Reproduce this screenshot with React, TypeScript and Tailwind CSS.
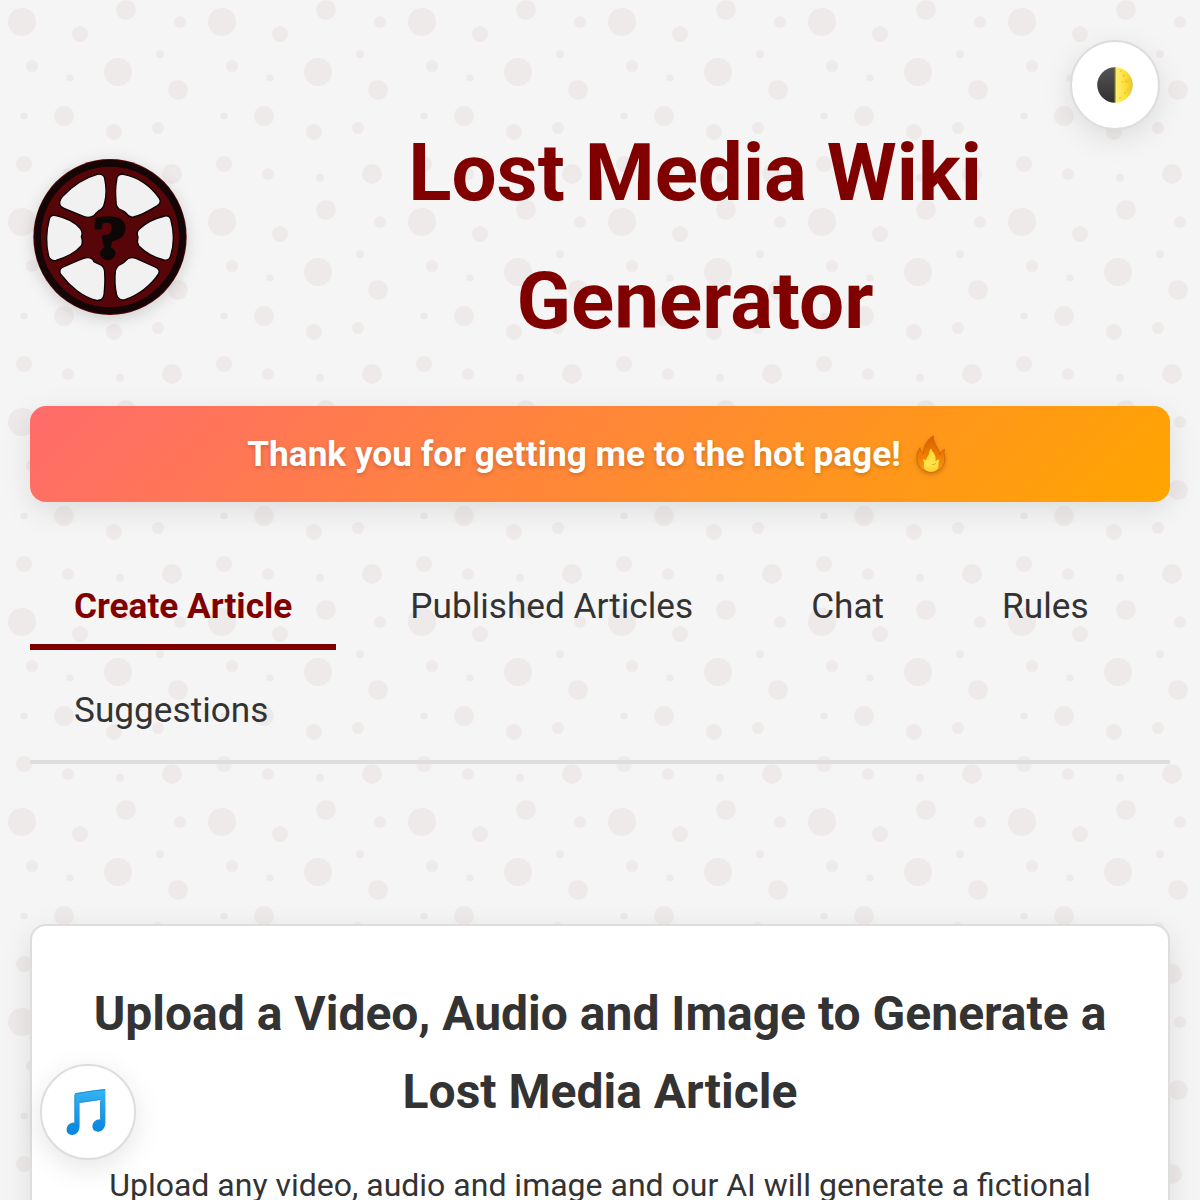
import React, { useState } from 'react';

const TABS = ['Create Article', 'Published Articles', 'Chat', 'Rules', 'Suggestions'];

// [cx, cy, r] inside a 200x200 tile
const BUBBLES = [
  [22, 22, 14], [118, 72, 14], [126, 10, 10], [178, 90, 10], [64, 116, 10], [172, 174, 10],
  [80, 34, 8], [114, 132, 8], [24, 164, 8], [180, 22, 6], [32, 66, 6], [158, 128, 6], [68, 174, 6],
  [160, 54, 4], [120, 178, 4], [70, 78, 3.6], [24, 116, 3.6],
];

const REEL_WINDOWS = [
  'M120 180Q116 168 128 154C160 120 195 98 232 88Q250 84 254 100C260 130 260 150 254 172Q250 192 238 196Q226 206 222 212Q205 222 185 212L132 190Q122 186 120 180Z',
  'M290 105Q290 86 310 88C355 95 395 125 418 160Q426 172 412 182C390 196 360 212 340 216Q328 218 318 204Q312 198 298 192Q288 186 288 168C286 145 286 125 290 105Z',
  'M88 222Q92 208 108 212C135 218 165 232 180 250Q190 262 184 275Q190 290 184 302C165 325 135 338 108 346Q92 350 86 334C78 300 78 260 88 222Z',
  'M452 222Q448 210 435 213C405 220 375 235 358 252Q348 262 354 276Q350 290 356 302C378 325 405 338 432 345Q448 348 452 332C462 300 462 258 452 222Z',
  'M120 378Q118 372 130 366C155 355 180 342 200 338Q216 336 222 350Q230 354 242 360Q254 366 254 385C256 410 254 430 252 450Q248 468 230 466C190 458 150 425 124 390Q118 384 120 378Z',
  'M290 450C284 425 284 400 286 378Q290 362 302 358Q312 354 318 346Q328 334 348 340L405 366Q422 374 416 386C395 420 355 450 315 464Q296 468 290 450Z',
];

const BubbleBackground: React.FC = () => (
  <svg className="absolute inset-0 w-full h-full" aria-hidden="true">
    <defs>
      <pattern id="bubbles" width="200" height="200" patternUnits="userSpaceOnUse">
        {BUBBLES.map(([cx, cy, r]) => <circle key={`${cx}-${cy}`} cx={cx} cy={cy} r={r} fill="#700000" fillOpacity="0.043" />)}
      </pattern>
    </defs>
    <rect width="100%" height="100%" fill="url(#bubbles)" />
  </svg>
);

const ReelLogo: React.FC = () => (
  <svg viewBox="30 36 480 480" className="w-40 h-40 shrink-0 overflow-visible drop-shadow-[0_4px_8px_rgba(0,0,0,0.15)]">
    <ellipse cx="270" cy="276" rx="230" ry="234" fill="#560508" />
    <ellipse cx="270" cy="276" rx="217" ry="221" fill="none" stroke="#140506" strokeWidth="20" />
    {REEL_WINDOWS.map(d => <path key={d} d={d} fill="#f0f1f0" stroke="#0b0405" strokeWidth="4" />)}
    <text transform="translate(270 338) scale(1.16 1)" textAnchor="middle" fontFamily="Liberation Serif" fontWeight="700" fontSize="184" fill="#0d0707" stroke="#0d0707" strokeWidth="10" strokeLinejoin="round">?</text>
  </svg>
);

const MoonIcon: React.FC = () => (
  <svg viewBox="0 0 36 36" className="w-9 h-9">
    <defs>
      <linearGradient id="moonDark" x1="0" y1="0" x2="0" y2="1"><stop stopColor="#555" /><stop offset="1" stopColor="#303030" /></linearGradient>
      <linearGradient id="moonLight"><stop stopColor="#fff176" /><stop offset=".6" stopColor="#fbdf38" /><stop offset="1" stopColor="#e5c33a" /></linearGradient>
    </defs>
    <path d="M18 .2a17.8 17.8 0 0 0 0 35.6z" fill="url(#moonDark)" />
    <path d="M18 .2a17.8 17.8 0 0 1 0 35.6z" fill="url(#moonLight)" />
    <path d="M18 .2v35.6" stroke="#857c35" strokeWidth="1.2" />
    <g fill="#f5cd22">
      <circle cx="27" cy="9" r="1.4" /><circle cx="30" cy="14" r="2.2" /><circle cx="26" cy="15" r="1.1" />
      <circle cx="31" cy="23" r="1.6" /><circle cx="28" cy="26" r="1.2" /><circle cx="23" cy="31" r="1.1" /><circle cx="24" cy="4" r="1" />
    </g>
  </svg>
);

const FireIcon: React.FC = () => (
  <svg viewBox="0 0 32 38" className="w-8 h-[38px] drop-shadow-[0_2px_2px_rgba(0,0,0,0.2)]">
    <defs>
      <linearGradient id="flame" x1="0" y1="0" x2="0" y2="1"><stop stopColor="#d95f00" /><stop offset=".5" stopColor="#ef7900" /><stop offset="1" stopColor="#f79a13" /></linearGradient>
      <linearGradient id="flameCore" x1="0" y1="0" x2="0" y2="1"><stop stopColor="#ffd735" /><stop offset=".7" stopColor="#ffe34b" /><stop offset="1" stopColor="#ffc928" /></linearGradient>
    </defs>
    <path d="M18.5 .8C14 3 8.4 10 8.4 18.6Q5.3 16.8 4.8 12.8C2.5 16.5 1.5 20 2 24.5C2.7 32 8.5 37.2 16 37.2S29.6 31.8 29.9 24.5C30 20.5 28.2 18.5 29.5 14.5C26.5 15.5 25.5 17.5 24.8 20C24.3 13 17.5 9 18.5 .8Z" fill="url(#flame)" stroke="#c96508" strokeWidth=".8" />
    <path d="M16 13.5C13.5 16 14.8 18.5 13 21Q11.5 23 11 25.2L8 24C8.2 26 9.5 27.5 9 29.5C7.5 33 11.3 37 16 37S24 33.5 23.5 29.5Q23.3 27 24.6 24.5Q21.5 24.5 20.5 26.5C21.5 20 18.5 18.5 16 13.5Z" fill="url(#flameCore)" />
    <path d="M17 29.5Q20 30.5 21 28" stroke="#e8a51c" strokeWidth="1" fill="none" />
  </svg>
);

const NotesIcon: React.FC = () => (
  <svg viewBox="0 0 40 48" className="w-10 h-12 -translate-x-0.5">
    <defs>
      <linearGradient id="notes" x1="0" y1="0" x2="0" y2="1"><stop stopColor="#35b4f4" /><stop offset="1" stopColor="#0984d8" /></linearGradient>
    </defs>
    <path d="M8.6 6.5Q8.5 5.2 9.8 5L38 1Q39.4.9 39.4 2.3V34.5C39.4 39.8 36 43.8 32 43.8C28.8 43.8 26.4 41.6 26.4 38.6C26.4 34 30.6 30.8 34.4 31.4V11.8L13.6 14.8V38C13.6 43 10.3 47 6.2 47C3 47 .6 45 .6 41.8C.6 37.2 4.8 34 8.6 34.6Z" fill="url(#notes)" />
    <path d="M9 6Q23 3 39 1.5M13.6 14.5L34.3 11.6M8.9 7V34.5M34.6 13V31" stroke="#1688cc" strokeWidth=".8" fill="none" />
    <ellipse cx="7.2" cy="40.8" rx="6" ry="5.4" fill="#0a8ae6" opacity=".4" transform="rotate(-35 7.2 40.8)" />
    <ellipse cx="32.8" cy="37.6" rx="6" ry="5.4" fill="#0a8ae6" opacity=".4" transform="rotate(-35 32.8 37.6)" />
  </svg>
);

const App: React.FC = () => {
  const [activeTab, setActiveTab] = useState('Create Article');

  return (
    <div className="relative h-[1200px] overflow-hidden bg-[#f5f5f5] text-[#333] font-[Roboto,sans-serif]">
      <BubbleBackground />

      <div className="relative px-[30px] pt-[109px]">
        <header className="flex items-center gap-[30px]">
          <ReelLogo />
          <h1 className="flex-1 text-center text-[80px] leading-[128px] font-bold text-[#800000]">Lost Media Wiki Generator</h1>
        </header>

        <div className="mt-[41px] h-24 pr-1.5 rounded-2xl bg-[linear-gradient(135deg,#ff6b6b,#ffa500)] shadow-[0_8px_30px_rgba(0,0,0,0.1)] flex items-center justify-center gap-3.5 text-white">
          <p className="text-[35.2px] font-bold [text-shadow:0_2px_4px_rgba(0,0,0,0.2)]">Thank you for getting me to the hot page!</p>
          <FireIcon />
        </div>

        <nav className="mt-16 pb-1.5 flex flex-wrap gap-x-[30px] gap-y-5 border-b-4 border-[#ddd]">
          {TABS.map(tab => (
            <button
              key={tab}
              onClick={() => setActiveTab(tab)}
              className={`h-[84px] px-11 pt-0.5 border-b-6 text-[35.2px] cursor-pointer ${activeTab === tab ? 'border-[#800000] text-[#800000] font-bold' : 'border-transparent'}`}
            >
              {tab}
            </button>
          ))}
        </nav>

        <main className="mt-40 px-[58px] pt-[49px] pb-16 rounded-2xl bg-white border-2 border-[#ddd] shadow-[0_8px_30px_rgba(0,0,0,0.1)] text-center">
          <h2 className="text-[48px] leading-[78px] font-bold">Upload a Video, Audio and Image to Generate a Lost Media Article</h2>
          <p className="mt-[29px] text-[32px] leading-[51.2px]">Upload any video, audio and image and our AI will generate a fictional</p>
        </main>
      </div>

      <button className="absolute top-10 right-10 w-[90px] h-[90px] rounded-full bg-white border-2 border-[#ddd] shadow-[0_8px_30px_rgba(0,0,0,0.1)] flex items-center justify-center cursor-pointer" aria-label="Toggle theme">
        <MoonIcon />
      </button>
      <button className="absolute bottom-10 left-10 w-24 h-24 rounded-full bg-white border-2 border-[#ddd] shadow-[0_8px_30px_rgba(0,0,0,0.1)] flex items-center justify-center cursor-pointer" aria-label="Toggle music">
        <NotesIcon />
      </button>
    </div>
  );
};

export default App;
